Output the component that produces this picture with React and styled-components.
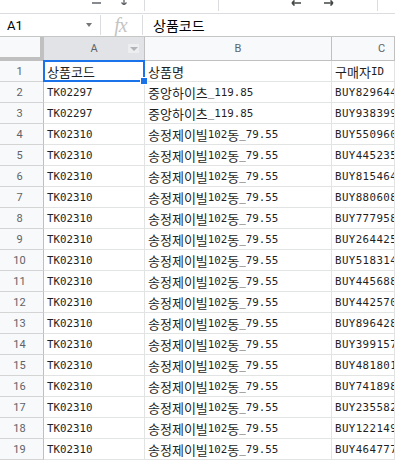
import React from 'react';
import styled, { createGlobalStyle } from 'styled-components';

const GlobalStyle = createGlobalStyle`
  html, body {
    margin: 0;
    padding: 0;
    background: #ffffff;
    overflow: hidden;
  }
  body {
    font-family: Roboto, "Liberation Sans", Arial, sans-serif;
  }
`;

const Page = styled.div`
  width: 395px;
  height: 462px;
  overflow: hidden;
  background: #fff;
`;

const Toolbar = styled.div`
  height: 13px;
  border-bottom: 1px solid #dadce0;
  display: flex;
  align-items: flex-start;
`;

const ToolSlot = styled.div`
  width: ${(p) => p.w}px;
  height: 11px;
  display: flex;
  align-items: flex-start;
  gap: ${(p) => p.gap || 0}px;
  padding-left: ${(p) => p.pl || 0}px;
  box-sizing: border-box;
  border-right: ${(p) => (p.sep ? '1px solid #dadce0' : 'none')};
`;

const FormulaBar = styled.div`
  height: 22px;
  border-bottom: 1px solid #c4c7c5;
  display: flex;
  align-items: center;
`;

const NameBox = styled.div`
  width: 101px;
  height: 20px;
  box-sizing: border-box;
  padding: 0 8px 0 7px;
  display: flex;
  align-items: center;
  justify-content: space-between;
  border-right: 1px solid #dadce0;
  font-size: 13px;
  color: #000;
`;

const Caret = styled.span`
  width: 0;
  height: 0;
  border-left: 3.5px solid transparent;
  border-right: 3.5px solid transparent;
  border-top: 4px solid #777;
`;

const FxBox = styled.div`
  width: 42px;
  height: 20px;
  box-sizing: border-box;
  border-right: 1px solid #dadce0;
  display: flex;
  align-items: center;
  justify-content: center;
  font-family: "Liberation Serif", "DejaVu Serif", serif;
  font-style: italic;
  font-size: 20px;
  letter-spacing: -1px;
  color: #c4c4c4;
  padding-right: 2px;
`;

const FormulaText = styled.div`
  padding-left: 10px;
  font-family: "Noto Sans CJK KR", sans-serif;
  font-size: 14px;
  color: #000;
`;

const Sheet = styled.div`
  display: flex;
  flex-direction: column;
`;

const Row = styled.div`
  display: flex;
  height: ${(p) => (p.header ? 24 : 21)}px;
`;

const Corner = styled.div`
  width: 44px;
  height: 24px;
  box-sizing: border-box;
  background: #f8f9fa;
  border-right: 4px solid #c0c0c0;
  border-bottom: 4px solid #c0c0c0;
`;

const ColHead = styled.div`
  position: relative;
  width: ${(p) => p.w}px;
  flex: ${(p) => (p.w ? 'none' : '1')};
  box-sizing: border-box;
  background: ${(p) => (p.active ? '#e1e3e6' : '#f8f9fa')};
  border-right: 1px solid #c0c0c0;
  border-bottom: 1px solid #c0c0c0;
  display: flex;
  align-items: center;
  justify-content: ${(p) => (p.w ? 'center' : 'flex-start')};
  padding-left: ${(p) => (p.w ? 0 : 46)}px;
  font-size: 11px;
  color: #5f6368;
`;

const FilterBtn = styled.span`
  position: absolute;
  right: 5px;
  top: 7px;
  width: 11px;
  height: 9px;
  background: #eceef0;
  display: flex;
  align-items: center;
  justify-content: center;
  &::after {
    content: '';
    border-left: 4px solid transparent;
    border-right: 4px solid transparent;
    border-top: 4px solid #b0b3b8;
  }
`;

const RowHead = styled.div`
  width: 44px;
  box-sizing: border-box;
  background: #f8f9fa;
  border-right: 1px solid #c0c0c0;
  border-bottom: 1px solid #d4d4d4;
  display: flex;
  align-items: center;
  justify-content: center;
  padding-right: 4px;
  font-size: 11px;
  color: #5f6368;
`;

const Cell = styled.div`
  position: relative;
  width: ${(p) => p.w}px;
  flex: ${(p) => (p.w ? 'none' : '1')};
  min-width: 0;
  box-sizing: border-box;
  border-right: 1px solid #e2e3e3;
  border-bottom: 1px solid #e2e3e3;
  padding: 1px 3px 0;
  display: flex;
  align-items: center;
  overflow: hidden;
  white-space: nowrap;
  font-family: "DejaVu Sans Mono", "Liberation Mono", monospace;
  font-size: 10.8px;
  letter-spacing: ${(p) => p.spread || 0}px;
  color: #1f1f1f;

  ${(p) =>
    p.selected &&
    `
    overflow: visible;
    &::before {
      content: '';
      position: absolute;
      left: -1px;
      top: -1px;
      right: -1px;
      bottom: -1px;
      border: 2px solid #1a73e8;
      pointer-events: none;
    }
    &::after {
      content: '';
      position: absolute;
      right: -4px;
      bottom: -4px;
      width: 6px;
      height: 6px;
      background: #1a73e8;
      border: 1px solid #fff;
      z-index: 2;
    }
  `}
`;

const Hangul = styled.span`
  font-family: "Noto Sans CJK KR", sans-serif;
  font-size: 13px;
  letter-spacing: 0;
`;

// Korean runs in a CJK face, everything else in the mono face
const Mixed = ({ text }) =>
  text.split(/([가-힣]+)/).map((part, i) =>
    /[가-힣]/.test(part) ? <Hangul key={i}>{part}</Hangul> : part
  );

const ArrowIcon = ({ dir }) => (
  <svg width="10" height="6" viewBox="0 0 10 6">
    {dir === 'left' ? (
      <path d="M1 3H10M1 3L3.5 0.5M1 3L3.5 5.5" stroke="#444746" strokeWidth="1.6" fill="none" />
    ) : (
      <path d="M0 3H9M9 3L6.5 0.5M9 3L6.5 5.5" stroke="#444746" strokeWidth="1.6" fill="none" />
    )}
  </svg>
);

const rows = [
  ['TK02297', '중앙하이츠_119.85', 'BUY829644'],
  ['TK02297', '중앙하이츠_119.85', 'BUY938399'],
  ['TK02310', '송정제이빌102동_79.55', 'BUY550960'],
  ['TK02310', '송정제이빌102동_79.55', 'BUY445235'],
  ['TK02310', '송정제이빌102동_79.55', 'BUY815464'],
  ['TK02310', '송정제이빌102동_79.55', 'BUY880608'],
  ['TK02310', '송정제이빌102동_79.55', 'BUY777958'],
  ['TK02310', '송정제이빌102동_79.55', 'BUY264425'],
  ['TK02310', '송정제이빌102동_79.55', 'BUY518314'],
  ['TK02310', '송정제이빌102동_79.55', 'BUY445688'],
  ['TK02310', '송정제이빌102동_79.55', 'BUY442570'],
  ['TK02310', '송정제이빌102동_79.55', 'BUY896428'],
  ['TK02310', '송정제이빌102동_79.55', 'BUY399157'],
  ['TK02310', '송정제이빌102동_79.55', 'BUY481801'],
  ['TK02310', '송정제이빌102동_79.55', 'BUY741898'],
  ['TK02310', '송정제이빌102동_79.55', 'BUY235582'],
  ['TK02310', '송정제이빌102동_79.55', 'BUY122149'],
  ['TK02310', '송정제이빌102동_79.55', 'BUY464777'],
];

const App = () => {
  return (
    <Page>
      <GlobalStyle />
      <Toolbar>
        <ToolSlot w={145} sep pl={92} gap={20}>
          <svg width="9" height="4" viewBox="0 0 9 4">
            <path d="M0 3H9" stroke="#5f6368" strokeWidth="1.5" />
          </svg>
          <svg width="6" height="5" viewBox="0 0 6 5">
            <path d="M3 0V5M0.5 2.5L3 5L5.5 2.5" stroke="#5f6368" strokeWidth="1.3" fill="none" />
          </svg>
        </ToolSlot>
        <ToolSlot w={74} sep />
        <ToolSlot w={159} sep pl={72} gap={23}>
          <ArrowIcon dir="left" />
          <ArrowIcon dir="right" />
        </ToolSlot>
      </Toolbar>
      <FormulaBar>
        <NameBox>
          <span>A1</span>
          <Caret />
        </NameBox>
        <FxBox>fx</FxBox>
        <FormulaText>상품코드</FormulaText>
      </FormulaBar>
      <Sheet>
        <Row header>
          <Corner />
          <ColHead w={101} active>
            A
            <FilterBtn />
          </ColHead>
          <ColHead w={187}>B</ColHead>
          <ColHead>C</ColHead>
        </Row>
        <Row>
          <RowHead>1</RowHead>
          <Cell w={101} selected><Mixed text="상품코드" /></Cell>
          <Cell w={187}><Mixed text="상품명" /></Cell>
          <Cell><Mixed text="구매자ID" /></Cell>
        </Row>
        {rows.map((r, i) => (
          <Row key={i}>
            <RowHead>{i + 2}</RowHead>
            <Cell w={101}><Mixed text={r[0]} /></Cell>
            <Cell w={187}><Mixed text={r[1]} /></Cell>
            <Cell spread={0.4}><Mixed text={r[2]} /></Cell>
          </Row>
        ))}
      </Sheet>
    </Page>
  );
};

export default App;
